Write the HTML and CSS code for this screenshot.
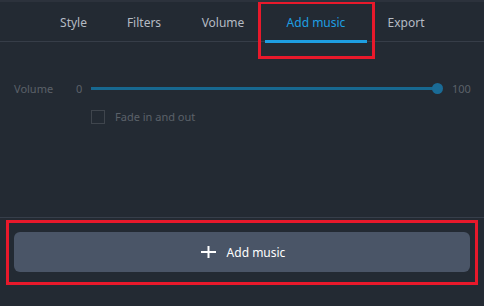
FILE: index.html
```html
<!DOCTYPE html>
<html>
  <head>
    <meta charset="utf-8">
    <title>Add music</title>
    <link rel="stylesheet" href="styles.css">
  </head>
  <body>
    <div class="app">
      <div class="tabs">
        <div class="tab w-style">Style</div>
        <div class="tab w-filters">Filters</div>
        <div class="tab w-volume">Volume</div>
        <div class="tab w-music active">Add music</div>
        <div class="tab w-export">Export</div>
      </div>
      <div class="panel">
        <div class="volume-row">
          <span class="label">Volume</span>
          <span class="num">0</span>
          <div class="slider">
            <div class="track"></div>
            <div class="thumb"></div>
          </div>
          <span class="num max">100</span>
        </div>
        <div class="check-row">
          <span class="box"></span>
          <span class="check-label">Fade in and out</span>
        </div>
      </div>
      <div class="footer">
        <button class="add-btn">
          <svg width="16" height="12" viewBox="0 0 16 12">
            <path d="M0 6h15M7.5 0v12" stroke="#ffffff" stroke-width="2" fill="none"/>
          </svg>
          <span>Add music</span>
        </button>
      </div>
      <div class="mark mark-tab"></div>
      <div class="mark mark-btn"></div>
    </div>
  </body>
</html>
```
FILE: styles.css
```css
body {
  margin: 0;
  background: #232a33;
  font-family: "Noto Sans", "Open Sans", sans-serif;
}
.app {
  position: relative;
  width: 484px;
  height: 306px;
  overflow: hidden;
  border-top: 2px solid #2c323c;
  box-sizing: border-box;
}
.tabs {
  display: flex;
  height: 39px;
  padding-left: 40px;
  border-bottom: 1px solid #363d48;
}
.tab {
  display: flex;
  align-items: center;
  justify-content: center;
  font-size: 12px;
  color: #b5bbc3;
  box-sizing: border-box;
  padding-top: 2px;
}
.w-style { width: 67px; }
.w-filters { width: 74px; }
.w-volume { width: 84px; }
.w-music { width: 102px; }
.w-export { width: 78px; }
.tab.active {
  color: #1e9fe2;
  height: 41px;
  border-bottom: 3px solid #1e9fe2;
  padding-top: 3px;
}
.panel {
  height: 176px;
  border-bottom: 1px solid #363e4a;
  padding-top: 39px;
  box-sizing: border-box;
}
.volume-row {
  display: flex;
  align-items: center;
  height: 14px;
  padding-left: 14px;
  font-size: 11px;
  color: #5b6169;
}
.label {
  width: 62px;
}
.num {
  width: 15px;
}
.num.max {
  margin-left: 10px;
}
.slider {
  position: relative;
  width: 351px;
  height: 11px;
}
.track {
  position: absolute;
  left: 0;
  top: 4px;
  width: 346px;
  height: 3px;
  background: #176890;
}
.thumb {
  position: absolute;
  left: 341px;
  top: 0;
  width: 11px;
  height: 11px;
  border-radius: 50%;
  background: #1a6b96;
}
.check-row {
  display: flex;
  align-items: center;
  margin-top: 14px;
  padding-left: 91px;
  font-size: 11px;
  color: #5b6169;
}
.box {
  width: 12px;
  height: 12px;
  border: 1px solid #3f454d;
  margin-right: 10px;
}
.footer {
  padding: 14px 14px 0;
}
.add-btn {
  display: flex;
  align-items: center;
  justify-content: center;
  gap: 10px;
  width: 456px;
  height: 40px;
  border: none;
  border-radius: 6px;
  background: #4a5567;
  color: #ffffff;
  font-family: inherit;
  font-size: 12px;
  padding: 0 0 0 2px;
}
.mark {
  position: absolute;
  border: 3px solid #e8192b;
}
.mark-tab {
  left: 258px;
  top: -1px;
  width: 111px;
  height: 52px;
}
.mark-btn {
  left: 6px;
  top: 218px;
  width: 466px;
  height: 59px;
}
```
